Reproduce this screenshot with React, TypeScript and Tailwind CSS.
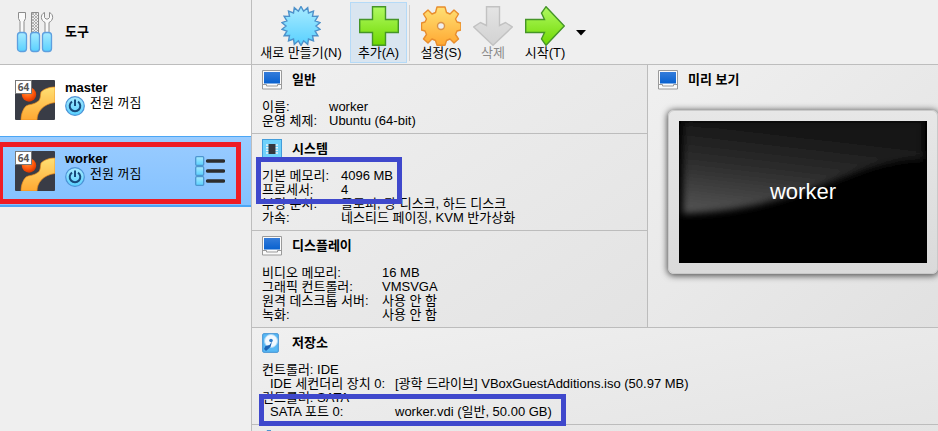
import type { ReactNode } from "react";

const starPoints = Array.from({ length: 36 }, (_, i) => {
  const r = i % 2 === 0 ? 19.5 : 15;
  const a = (Math.PI * i) / 18 - Math.PI / 2;
  return `${(20 + r * Math.cos(a)).toFixed(1)},${(20 + r * Math.sin(a)).toFixed(1)}`;
}).join(" ");

function Gradients() {
  return (
    <svg width="0" height="0" className="absolute" aria-hidden="true">
      <defs>
        <linearGradient id="blue" x1="0" y1="0" x2="0" y2="1">
          <stop offset="0" stopColor="#a8ebff" />
          <stop offset="1" stopColor="#58d0ff" />
        </linearGradient>
        <linearGradient id="green" x1="0" y1="0" x2="0" y2="1">
          <stop offset="0" stopColor="#b0fa62" />
          <stop offset="1" stopColor="#6fd800" />
        </linearGradient>
        <linearGradient id="amber" x1="0" y1="0" x2="0" y2="1">
          <stop offset="0" stopColor="#ffe074" />
          <stop offset="1" stopColor="#ffa832" />
        </linearGradient>
        <linearGradient id="silver" x1="0" y1="0" x2="0" y2="1">
          <stop offset="0" stopColor="#e4e4e4" />
          <stop offset="1" stopColor="#d2d2d2" />
        </linearGradient>
        <linearGradient id="screen" x1="0" y1="0" x2="0" y2="1">
          <stop offset="0" stopColor="#347cda" />
          <stop offset="1" stopColor="#0861cf" />
        </linearGradient>
        <radialGradient id="ball" cx="0.4" cy="0.3" r="0.7">
          <stop offset="0" stopColor="#ff9a4a" />
          <stop offset="0.6" stopColor="#ff5a0c" />
          <stop offset="1" stopColor="#d93600" />
        </radialGradient>
        <linearGradient id="gloss" x1="0" y1="1" x2="0.3" y2="0">
          <stop offset="0" stopColor="#565656" />
          <stop offset="0.5" stopColor="#2f2f2f" />
          <stop offset="1" stopColor="#131313" />
        </linearGradient>
        <filter id="soft" x="-10%" y="-10%" width="120%" height="120%">
          <feGaussianBlur stdDeviation="3.5" />
        </filter>
        <pattern id="hatch" width="3" height="3" patternUnits="userSpaceOnUse">
          <rect width="3" height="3" fill="#eee" />
          <path d="M0 3 3 0M0 0l3 3" stroke="#999" strokeWidth=".7" />
        </pattern>
      </defs>
    </svg>
  );
}

function ToolsIcon() {
  return (
    <svg width="40" height="42" viewBox="0 0 40 42" aria-hidden="true">
      <g fill="#fafafa" stroke="#8c8c8c" strokeWidth="1">
        <path d="M3.500 1.500h7v6l-1.500 3V22H5V10.500L3.500 7.500z" />
        <path d="M16.500 1.500h7V22h-7z" fill="url(#hatch)" />
        <path d="M29.500 1.500c-4.500 2-4 8 .5 10V22h4V11.500c4.500-2 5-8 .5-10v5l-1.500 1.500h-2l-1.500-1.500z" />
      </g>
      <g fill="url(#blue)" stroke="#5d9fdf" strokeWidth="1.300">
        <rect x="2.500" y="21.500" width="9" height="19" rx="3" />
        <rect x="15.500" y="21.500" width="9" height="19" rx="3" />
        <rect x="27.500" y="21.500" width="9" height="19" rx="3" />
      </g>
    </svg>
  );
}

function MachineIcon() {
  return (
    <svg className="shrink-0" width="40" height="40" viewBox="0 0 40 40" role="img" aria-label="Ubuntu 64">
      <rect width="40" height="40" rx="1" fill="#393c46" />
      <path
        d="M40 7c-6 0-11 2-14 5-1 4 0 8-4 10-4 3-8 2-11 4-3 3-5 8-5 14h16c0-8 6-16 18-17.500z"
        fill="url(#amber)"
        stroke="#e88a1c"
        strokeWidth=".7"
      />
      <circle cx="14" cy="14.500" r="7.200" fill="url(#ball)" />
      <rect x=".5" y=".5" width="16" height="13" fill="#fff" stroke="#777" />
      <text x="8.500" y="10.500" textAnchor="middle" fontSize="10" fontWeight="700" fill="#555" fontFamily="Open Sans, sans-serif">
        64
      </text>
    </svg>
  );
}

function PowerIcon() {
  return (
    <svg className="shrink-0" width="20" height="20" viewBox="0 0 20 20" aria-hidden="true">
      <circle cx="10" cy="10" r="9.300" fill="url(#blue)" stroke="#4d93d6" strokeWidth="1.200" />
      <path d="M7 5.600a5.300 5.300 0 1 0 6 0M10 3.500v6.500" fill="none" stroke="#174a7c" strokeWidth="2" />
    </svg>
  );
}

function ListIcon() {
  return (
    <svg width="30" height="30" viewBox="0 0 30 30" aria-hidden="true">
      {[0, 10, 20].map((y) => (
        <g key={y}>
          <rect x=".7" y={y + 0.7} width="8" height="8.600" rx="1" fill="url(#blue)" stroke="#4d96cf" strokeWidth="1.300" />
          <path d={`M12.500 ${y + 5}h16`} stroke="#2d2d2d" strokeWidth="3.400" strokeLinecap="round" />
        </g>
      ))}
    </svg>
  );
}

function MonitorIcon() {
  return (
    <svg className="shrink-0" width="20" height="20" viewBox="0 0 20 20" aria-hidden="true">
      <path d="M.5.500h19v18.500H.5z" fill="#fafafa" stroke="#9a9a9a" />
      <rect x="2" y="2" width="16" height="11.500" fill="url(#screen)" />
      <path d="M1 14.500h3.500v1.500h11v-1.500H19" fill="none" stroke="#9a9a9a" />
    </svg>
  );
}

function ChipIcon() {
  return (
    <svg className="shrink-0" width="20" height="20" viewBox="0 0 20 20" aria-hidden="true">
      <rect x=".5" y=".5" width="19" height="19" fill="#6fd2fb" stroke="#439ddb" />
      <path d="M4 6h12M4 8.700h12M4 11.400h12M4 14h12" stroke="#e6f4fa" strokeWidth="1.400" />
      <rect x="6.500" y="5" width="7" height="10" fill="#34383e" />
    </svg>
  );
}

function DiskIcon() {
  return (
    <svg className="shrink-0" width="20" height="20" viewBox="0 0 20 20" aria-hidden="true">
      <rect x=".7" y=".7" width="15.600" height="18.600" rx="1" fill="#58b9f5" stroke="#3d8fd3" />
      <circle cx="9" cy="8" r="6.500" fill="#f1f9ff" stroke="#a7d5f5" />
      <circle cx="9" cy="7.500" r="1.800" fill="#2d7dcc" />
      <path d="M10 8.500 8.500 14l-4.500 4-2-2 1.500-3 4-1z" fill="#1c63b4" />
    </svg>
  );
}

function AudioIcon() {
  return (
    <svg width="20" height="20" viewBox="0 0 20 20" aria-hidden="true">
      <path d="M5 0h4v20L3 14H0V6h3z" fill="#4f94cf" />
    </svg>
  );
}

function ToolButton({ label, children, className = "" }: { label: string; children: ReactNode; className?: string }) {
  return (
    <button className={`flex flex-col items-center whitespace-nowrap border pt-[3px] ${className}`}>
      <svg width="40" height="40" viewBox="0 0 40 40" aria-hidden="true" strokeWidth="1.400">
        {children}
      </svg>
      {label}
    </button>
  );
}

function Toolbar() {
  return (
    <header className="flex h-[65px] items-start border-b border-[#bdbdbd] pt-0.5 pl-1">
      <ToolButton label="새로 만들기(N)" className="h-[61px] w-[90px] border-transparent">
        <polygon points={starPoints} fill="url(#blue)" stroke="#4d91ca" />
      </ToolButton>
      <ToolButton label="추가(A)" className="ml-1 h-[61px] w-[57px] border-[#b5daf7] bg-[#d9e5f0]">
        <path d="M13.500.700h13v12.800h12.800v13H26.500v12.800h-13V26.500H.7v-13h12.800z" fill="url(#green)" stroke="#459527" />
      </ToolButton>
      <div className="mt-[3px] ml-0.5 h-14 w-px bg-[#cfcfcf]" />
      <ToolButton label="설정(S)" className="h-[61px] w-[62px] border-transparent">
        <path
          d="M16 1h8l1.500 5.500 3.500 1.500 4-4 4.500 4-3 5 1.500 3 4 1v7l-4 1-1.500 3.500 3 4.500-4.500 4L29 33l-3.500 1.500L24 39.300h-8l-1.500-4.800L11 33l-4 4-4.500-4 3-4.500L4 25l-3.500-1v-7L4 16l1.500-3-3-5L7 4l4 4 3.500-1.500z"
          fill="url(#amber)"
          stroke="#e88d2d"
          strokeLinejoin="round"
        />
        <circle cx="20" cy="20" r="3.500" fill="#efefef" stroke="#d9934a" />
      </ToolButton>
      <ToolButton label="삭제" className="h-[61px] w-[42px] border-transparent text-[#8b8b8b]">
        <path d="M13.500.700h13v18.800l6-3L39.300 21 20 39.300.7 21l6.800-4.500 6 3z" fill="url(#silver)" stroke="#c2c2c2" />
      </ToolButton>
      <ToolButton label="시작(T)" className="h-[61px] w-[62px] border-transparent">
        <path d="M.7 13.500h18.800l-3-6.500L21 .7 39.300 20 21 39.300 16.500 33l3-6.500H.7z" fill="url(#green)" stroke="#459527" />
      </ToolButton>
      <button aria-label="시작 메뉴" className="mt-7">
        <svg width="10" height="6" viewBox="0 0 10 6" aria-hidden="true">
          <path d="M0 0h10L5 5.500z" fill="#000" />
        </svg>
      </button>
    </header>
  );
}

function Machine({ name, selected = false }: { name: string; selected?: boolean }) {
  return (
    <li
      className={`relative flex h-[71px] items-start pt-[15px] ${
        selected
          ? "bg-linear-to-b from-[#9accff] to-[#83c1ff] shadow-[inset_0_1px_#4ba6f5,inset_0_-2px_#4ba6f5]"
          : "bg-white"
      }`}
    >
      <button className="flex grow items-start gap-2.5 pl-[15px] text-left">
        <MachineIcon />
        <span className="flex flex-col gap-px pt-px">
          <b>{name}</b>
          <span className="flex gap-[5px]">
            <PowerIcon />
            전원 꺼짐
          </span>
        </span>
      </button>
      {selected && (
        <>
          <button aria-label="머신 도구" className="mt-[5px] mr-[26px]">
            <ListIcon />
          </button>
          <span className="pointer-events-none absolute top-1.5 right-2.5 -left-0.5 h-[62px] border-5 border-[#ee1c24]" />
        </>
      )}
    </li>
  );
}

function Section({ icon, title, children }: { icon: ReactNode; title: string; children: ReactNode }) {
  return (
    <section className="relative border-b border-[#bcbcbc] px-2.5 py-[5px]">
      <h2 className="mb-2.5 flex h-5 items-center gap-2.5 font-bold">
        {icon}
        {title}
      </h2>
      {children}
    </section>
  );
}

function Rows({ rows, columns }: { rows: [string, string][]; columns: string }) {
  return (
    <dl className="whitespace-nowrap">
      {rows.map(([label, value]) => (
        <div key={label} className={`grid ${columns}`}>
          <dt>{label}</dt>
          <dd>{value}</dd>
        </div>
      ))}
    </dl>
  );
}

function Preview() {
  return (
    <section className="w-[290px] shrink-0 border-b border-[#bcbcbc] bg-linear-to-br from-[#f0f0f0] to-[#e1e1e1] px-2.5 py-[5px]">
      <h2 className="flex h-5 items-center gap-2.5 font-bold">
        <MonitorIcon />
        미리 보기
      </h2>
      <div className="mt-5 ml-2.5 h-[164px] w-[270px] rounded-md border border-[#c9c9c9] bg-linear-to-b from-[#e7e7e7] to-[#dadada] px-2.5 py-2.5 shadow-[0_1px_6px_1px_#555]">
        <div className="relative flex h-[142px] items-center justify-center overflow-hidden bg-black text-[22px] text-white">
          <svg className="absolute inset-0 h-full w-full" viewBox="0 0 249 141" preserveAspectRatio="none" aria-hidden="true">
            <path d="M4 0h241v38C170 38 130 88 4 92z" fill="url(#gloss)" filter="url(#soft)" />
          </svg>
          <span className="relative">worker</span>
        </div>
      </div>
    </section>
  );
}

export default function App() {
  return (
    <div className="flex h-screen overflow-hidden bg-[#efefef] font-['Liberation_Sans','Noto_Sans_CJK_KR',sans-serif] text-[13px] leading-[14px] text-black">
      <Gradients />
      <aside className="w-[251px] shrink-0">
        <button className="flex h-[65px] w-full items-center gap-2.5 border-b border-[#bdbdbd] pl-[15px] font-bold">
          <ToolsIcon />
          도구
        </button>
        <ul>
          <Machine name="master" />
          <Machine name="worker" selected />
        </ul>
      </aside>
      <main className="min-w-0 grow border-l border-[#bdbdbd]">
        <Toolbar />
        <div className="flex">
          <div className="min-w-0 grow border-r border-[#bcbcbc] bg-linear-to-br from-[#f0f0f0] to-[#e3e3e3]">
            <Section icon={<MonitorIcon />} title="일반">
              <Rows
                columns="grid-cols-[67px_1fr]"
                rows={[
                  ["이름:", "worker"],
                  ["운영 체제:", "Ubuntu (64-bit)"],
                ]}
              />
            </Section>
            <Section icon={<ChipIcon />} title="시스템">
              <Rows
                columns="grid-cols-[79px_1fr]"
                rows={[
                  ["기본 메모리:", "4096 MB"],
                  ["프로세서:", "4"],
                  ["부팅 순서:", "플로피, 광 디스크, 하드 디스크"],
                  ["가속:", "네스티드 페이징, KVM 반가상화"],
                ]}
              />
              <span className="pointer-events-none absolute top-[23px] left-1 h-[47px] w-[146px] border-5 border-[#3f48cc]" />
            </Section>
            <Section icon={<MonitorIcon />} title="디스플레이">
              <Rows
                columns="grid-cols-[120px_1fr]"
                rows={[
                  ["비디오 메모리:", "16 MB"],
                  ["그래픽 컨트롤러:", "VMSVGA"],
                  ["원격 데스크톱 서버:", "사용 안 함"],
                  ["녹화:", "사용 안 함"],
                ]}
              />
            </Section>
          </div>
          <Preview />
        </div>
        <div className="bg-linear-to-br from-[#f0f0f0] to-[#e3e3e3]">
          <Section icon={<DiskIcon />} title="저장소">
            <p>컨트롤러: IDE</p>
            <div className="pl-2">
              <Rows
                columns="grid-cols-[125px_1fr]"
                rows={[["IDE 세컨더리 장치 0:", "[광학 드라이브] VBoxGuestAdditions.iso (50.97 MB)"]]}
              />
            </div>
            <p>컨트롤러: SATA</p>
            <div className="pl-2">
              <Rows columns="grid-cols-[125px_1fr]" rows={[["SATA 포트 0:", "worker.vdi (일반, 50.00 GB)"]]} />
            </div>
            <span className="pointer-events-none absolute top-[66px] left-[7px] h-8 w-[307px] border-5 border-[#3f48cc]" />
          </Section>
          <div className="px-2.5 py-[5px]">
            <AudioIcon />
          </div>
        </div>
      </main>
    </div>
  );
}
